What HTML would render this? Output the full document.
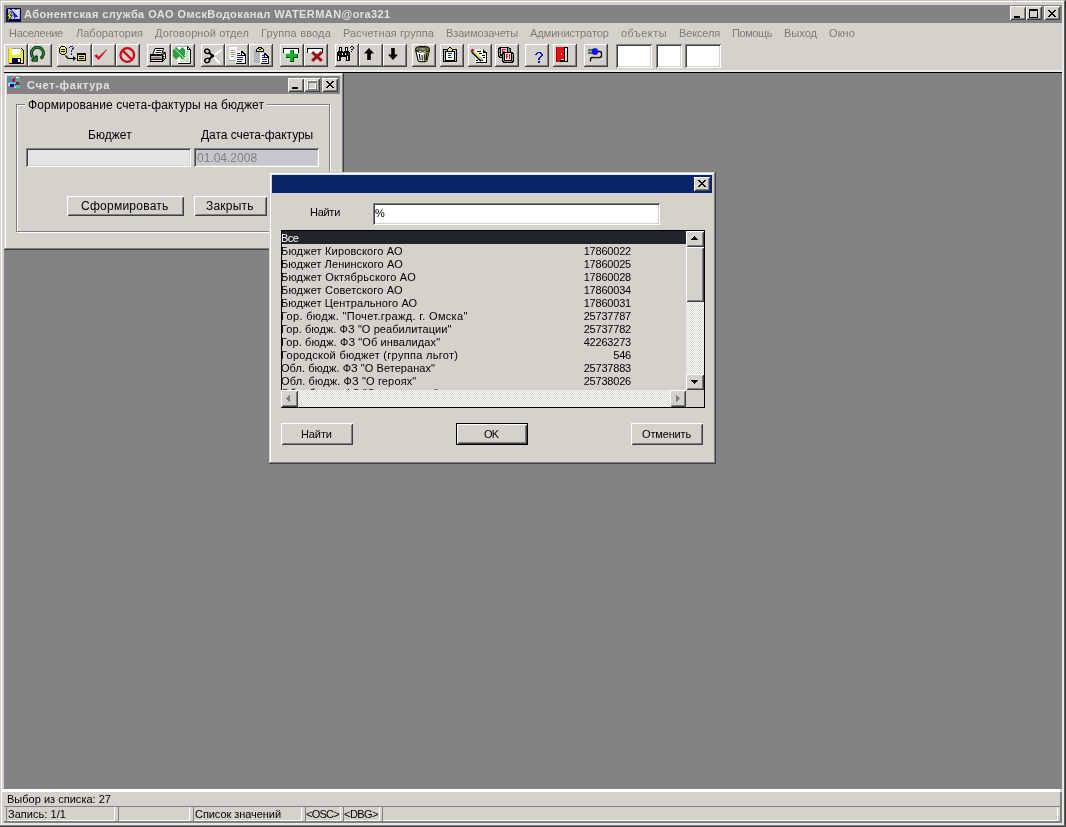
<!DOCTYPE html>
<html><head><meta charset="utf-8"><title>Oracle Forms</title>
<style>
html,body{margin:0;padding:0;}
body{width:1066px;height:827px;overflow:hidden;background:#D5D2CB;position:relative;font-family:"Liberation Sans",sans-serif;font-size:11px;}
div,svg{position:absolute;box-sizing:border-box;}
</style></head><body>
<div style="left:0px;top:0px;width:1066px;height:1px;background:#C8C5BE;"></div>
<div style="left:1px;top:1px;width:1063px;height:1px;background:#FFFFFF;"></div>
<div style="left:1px;top:1px;width:1px;height:824px;background:#FFFFFF;"></div>
<div style="left:1062px;top:4px;width:2px;height:821px;background:#ECEAE6;"></div>
<div style="left:1064px;top:1px;width:1px;height:825px;background:#5A5A5A;"></div>
<div style="left:1065px;top:0px;width:1px;height:827px;background:#3A3A3A;"></div>
<div style="left:0px;top:825px;width:1065px;height:1px;background:#808080;"></div>
<div style="left:0px;top:826px;width:1066px;height:1px;background:#404040;"></div>
<div style="left:4px;top:5px;width:1058px;height:18px;background:#848284;"></div>
<div style="left:24px;top:7px;font-size:11px;line-height:15px;color:#E4E2DC;white-space:pre;will-change:transform;letter-spacing:0.420px;font-weight:bold;">Абонентская служба ОАО ОмскВодоканал WATERMAN@ora321</div>
<div style="left:1010px;top:6px;width:16px;height:14px;background:#D5D2CB;box-shadow:inset 1px 1px 0 #FFFFFF,inset -1px -1px 0 #404040,inset 2px 2px 0 #D5D2CB,inset -2px -2px 0 #808080;"></div>
<div style="left:1026px;top:6px;width:16px;height:14px;background:#D5D2CB;box-shadow:inset 1px 1px 0 #FFFFFF,inset -1px -1px 0 #404040,inset 2px 2px 0 #D5D2CB,inset -2px -2px 0 #808080;"></div>
<div style="left:1044px;top:6px;width:16px;height:14px;background:#D5D2CB;box-shadow:inset 1px 1px 0 #FFFFFF,inset -1px -1px 0 #404040,inset 2px 2px 0 #D5D2CB,inset -2px -2px 0 #808080;"></div>
<div style="left:1014px;top:16px;width:6px;height:2px;background:#000;"></div>
<div style="left:1029px;top:9px;width:9px;height:9px;border:1px solid #000;border-top-width:2px;"></div>
<svg style="left:1048px;top:10px" width="8" height="7" viewBox="0 0 8 7" shape-rendering="crispEdges"><path d="M0 0h2v1h1v1h2v-1h1v-1h2v1h-1v1h-1v1h-1v1h1v1h1v1h1v1h-2v-1h-1v-1h-2v1h-1v1h-2v-1h1v-1h1v-1h1v-1h-1v-1h-1v-1h-1z" fill="#000"/></svg>
<div style="left:9px;top:26px;font-size:11px;line-height:15px;color:#7E7C78;white-space:pre;will-change:transform;letter-spacing:-0.244px;">Население</div>
<div style="left:76px;top:26px;font-size:11px;line-height:15px;color:#7E7C78;white-space:pre;will-change:transform;">Лаборатория</div>
<div style="left:155px;top:26px;font-size:11px;line-height:15px;color:#7E7C78;white-space:pre;will-change:transform;letter-spacing:0.119px;">Договорной отдел</div>
<div style="left:261px;top:26px;font-size:11px;line-height:15px;color:#7E7C78;white-space:pre;will-change:transform;letter-spacing:0.175px;">Группа ввода</div>
<div style="left:343px;top:26px;font-size:11px;line-height:15px;color:#7E7C78;white-space:pre;will-change:transform;letter-spacing:0.081px;">Расчетная группа</div>
<div style="left:446px;top:26px;font-size:11px;line-height:15px;color:#7E7C78;white-space:pre;will-change:transform;letter-spacing:-0.125px;">Взаимозачеты</div>
<div style="left:530px;top:26px;font-size:11px;line-height:15px;color:#7E7C78;white-space:pre;will-change:transform;letter-spacing:-0.031px;">Администратор</div>
<div style="left:621px;top:26px;font-size:11px;line-height:15px;color:#7E7C78;white-space:pre;will-change:transform;letter-spacing:0.443px;">объекты</div>
<div style="left:679px;top:26px;font-size:11px;line-height:15px;color:#7E7C78;white-space:pre;will-change:transform;letter-spacing:-0.143px;">Векселя</div>
<div style="left:732px;top:26px;font-size:11px;line-height:15px;color:#7E7C78;white-space:pre;will-change:transform;letter-spacing:-0.417px;">Помощь</div>
<div style="left:784px;top:26px;font-size:11px;line-height:15px;color:#7E7C78;white-space:pre;will-change:transform;letter-spacing:0.020px;">Выход</div>
<div style="left:829px;top:26px;font-size:11px;line-height:15px;color:#7E7C78;white-space:pre;will-change:transform;letter-spacing:0.100px;">Окно</div>
<div style="left:4px;top:44px;width:24px;height:23px;background:#D5D2CB;box-shadow:inset 1px 1px 0 #FFFFFF,inset -1px -1px 0 #808080;"></div>
<div style="left:4px;top:66px;width:24px;height:1px;background:#404040;"></div>
<div style="left:27px;top:44px;width:1px;height:23px;background:#404040;"></div>
<div style="left:5px;top:65px;width:22px;height:1px;background:#808080;"></div>
<div style="left:26px;top:45px;width:1px;height:21px;background:#808080;"></div>
<div style="left:28px;top:44px;width:24px;height:23px;background:#D5D2CB;box-shadow:inset 1px 1px 0 #FFFFFF,inset -1px -1px 0 #808080;"></div>
<div style="left:28px;top:66px;width:24px;height:1px;background:#404040;"></div>
<div style="left:51px;top:44px;width:1px;height:23px;background:#404040;"></div>
<div style="left:29px;top:65px;width:22px;height:1px;background:#808080;"></div>
<div style="left:50px;top:45px;width:1px;height:21px;background:#808080;"></div>
<div style="left:57px;top:44px;width:35px;height:23px;background:#D5D2CB;box-shadow:inset 1px 1px 0 #FFFFFF,inset -1px -1px 0 #808080;"></div>
<div style="left:57px;top:66px;width:35px;height:1px;background:#404040;"></div>
<div style="left:91px;top:44px;width:1px;height:23px;background:#404040;"></div>
<div style="left:58px;top:65px;width:33px;height:1px;background:#808080;"></div>
<div style="left:90px;top:45px;width:1px;height:21px;background:#808080;"></div>
<div style="left:92px;top:44px;width:24px;height:23px;background:#D5D2CB;box-shadow:inset 1px 1px 0 #FFFFFF,inset -1px -1px 0 #808080;"></div>
<div style="left:92px;top:66px;width:24px;height:1px;background:#404040;"></div>
<div style="left:115px;top:44px;width:1px;height:23px;background:#404040;"></div>
<div style="left:93px;top:65px;width:22px;height:1px;background:#808080;"></div>
<div style="left:114px;top:45px;width:1px;height:21px;background:#808080;"></div>
<div style="left:116px;top:44px;width:24px;height:23px;background:#D5D2CB;box-shadow:inset 1px 1px 0 #FFFFFF,inset -1px -1px 0 #808080;"></div>
<div style="left:116px;top:66px;width:24px;height:1px;background:#404040;"></div>
<div style="left:139px;top:44px;width:1px;height:23px;background:#404040;"></div>
<div style="left:117px;top:65px;width:22px;height:1px;background:#808080;"></div>
<div style="left:138px;top:45px;width:1px;height:21px;background:#808080;"></div>
<div style="left:147px;top:44px;width:24px;height:23px;background:#D5D2CB;box-shadow:inset 1px 1px 0 #FFFFFF,inset -1px -1px 0 #808080;"></div>
<div style="left:147px;top:66px;width:24px;height:1px;background:#404040;"></div>
<div style="left:170px;top:44px;width:1px;height:23px;background:#404040;"></div>
<div style="left:148px;top:65px;width:22px;height:1px;background:#808080;"></div>
<div style="left:169px;top:45px;width:1px;height:21px;background:#808080;"></div>
<div style="left:171px;top:44px;width:24px;height:23px;background:#D5D2CB;box-shadow:inset 1px 1px 0 #FFFFFF,inset -1px -1px 0 #808080;"></div>
<div style="left:171px;top:66px;width:24px;height:1px;background:#404040;"></div>
<div style="left:194px;top:44px;width:1px;height:23px;background:#404040;"></div>
<div style="left:172px;top:65px;width:22px;height:1px;background:#808080;"></div>
<div style="left:193px;top:45px;width:1px;height:21px;background:#808080;"></div>
<div style="left:201px;top:44px;width:24px;height:23px;background:#D5D2CB;box-shadow:inset 1px 1px 0 #FFFFFF,inset -1px -1px 0 #808080;"></div>
<div style="left:201px;top:66px;width:24px;height:1px;background:#404040;"></div>
<div style="left:224px;top:44px;width:1px;height:23px;background:#404040;"></div>
<div style="left:202px;top:65px;width:22px;height:1px;background:#808080;"></div>
<div style="left:223px;top:45px;width:1px;height:21px;background:#808080;"></div>
<div style="left:225px;top:44px;width:24px;height:23px;background:#D5D2CB;box-shadow:inset 1px 1px 0 #FFFFFF,inset -1px -1px 0 #808080;"></div>
<div style="left:225px;top:66px;width:24px;height:1px;background:#404040;"></div>
<div style="left:248px;top:44px;width:1px;height:23px;background:#404040;"></div>
<div style="left:226px;top:65px;width:22px;height:1px;background:#808080;"></div>
<div style="left:247px;top:45px;width:1px;height:21px;background:#808080;"></div>
<div style="left:249px;top:44px;width:24px;height:23px;background:#D5D2CB;box-shadow:inset 1px 1px 0 #FFFFFF,inset -1px -1px 0 #808080;"></div>
<div style="left:249px;top:66px;width:24px;height:1px;background:#404040;"></div>
<div style="left:272px;top:44px;width:1px;height:23px;background:#404040;"></div>
<div style="left:250px;top:65px;width:22px;height:1px;background:#808080;"></div>
<div style="left:271px;top:45px;width:1px;height:21px;background:#808080;"></div>
<div style="left:280px;top:44px;width:24px;height:23px;background:#D5D2CB;box-shadow:inset 1px 1px 0 #FFFFFF,inset -1px -1px 0 #808080;"></div>
<div style="left:280px;top:66px;width:24px;height:1px;background:#404040;"></div>
<div style="left:303px;top:44px;width:1px;height:23px;background:#404040;"></div>
<div style="left:281px;top:65px;width:22px;height:1px;background:#808080;"></div>
<div style="left:302px;top:45px;width:1px;height:21px;background:#808080;"></div>
<div style="left:304px;top:44px;width:24px;height:23px;background:#D5D2CB;box-shadow:inset 1px 1px 0 #FFFFFF,inset -1px -1px 0 #808080;"></div>
<div style="left:304px;top:66px;width:24px;height:1px;background:#404040;"></div>
<div style="left:327px;top:44px;width:1px;height:23px;background:#404040;"></div>
<div style="left:305px;top:65px;width:22px;height:1px;background:#808080;"></div>
<div style="left:326px;top:45px;width:1px;height:21px;background:#808080;"></div>
<div style="left:335px;top:44px;width:24px;height:23px;background:#D5D2CB;box-shadow:inset 1px 1px 0 #FFFFFF,inset -1px -1px 0 #808080;"></div>
<div style="left:335px;top:66px;width:24px;height:1px;background:#404040;"></div>
<div style="left:358px;top:44px;width:1px;height:23px;background:#404040;"></div>
<div style="left:336px;top:65px;width:22px;height:1px;background:#808080;"></div>
<div style="left:357px;top:45px;width:1px;height:21px;background:#808080;"></div>
<div style="left:359px;top:44px;width:24px;height:23px;background:#D5D2CB;box-shadow:inset 1px 1px 0 #FFFFFF,inset -1px -1px 0 #808080;"></div>
<div style="left:359px;top:66px;width:24px;height:1px;background:#404040;"></div>
<div style="left:382px;top:44px;width:1px;height:23px;background:#404040;"></div>
<div style="left:360px;top:65px;width:22px;height:1px;background:#808080;"></div>
<div style="left:381px;top:45px;width:1px;height:21px;background:#808080;"></div>
<div style="left:383px;top:44px;width:24px;height:23px;background:#D5D2CB;box-shadow:inset 1px 1px 0 #FFFFFF,inset -1px -1px 0 #808080;"></div>
<div style="left:383px;top:66px;width:24px;height:1px;background:#404040;"></div>
<div style="left:406px;top:44px;width:1px;height:23px;background:#404040;"></div>
<div style="left:384px;top:65px;width:22px;height:1px;background:#808080;"></div>
<div style="left:405px;top:45px;width:1px;height:21px;background:#808080;"></div>
<div style="left:412px;top:44px;width:24px;height:23px;background:#D5D2CB;box-shadow:inset 1px 1px 0 #FFFFFF,inset -1px -1px 0 #808080;"></div>
<div style="left:412px;top:66px;width:24px;height:1px;background:#404040;"></div>
<div style="left:435px;top:44px;width:1px;height:23px;background:#404040;"></div>
<div style="left:413px;top:65px;width:22px;height:1px;background:#808080;"></div>
<div style="left:434px;top:45px;width:1px;height:21px;background:#808080;"></div>
<div style="left:440px;top:44px;width:24px;height:23px;background:#D5D2CB;box-shadow:inset 1px 1px 0 #FFFFFF,inset -1px -1px 0 #808080;"></div>
<div style="left:440px;top:66px;width:24px;height:1px;background:#404040;"></div>
<div style="left:463px;top:44px;width:1px;height:23px;background:#404040;"></div>
<div style="left:441px;top:65px;width:22px;height:1px;background:#808080;"></div>
<div style="left:462px;top:45px;width:1px;height:21px;background:#808080;"></div>
<div style="left:468px;top:44px;width:24px;height:23px;background:#D5D2CB;box-shadow:inset 1px 1px 0 #FFFFFF,inset -1px -1px 0 #808080;"></div>
<div style="left:468px;top:66px;width:24px;height:1px;background:#404040;"></div>
<div style="left:491px;top:44px;width:1px;height:23px;background:#404040;"></div>
<div style="left:469px;top:65px;width:22px;height:1px;background:#808080;"></div>
<div style="left:490px;top:45px;width:1px;height:21px;background:#808080;"></div>
<div style="left:495px;top:44px;width:24px;height:23px;background:#D5D2CB;box-shadow:inset 1px 1px 0 #FFFFFF,inset -1px -1px 0 #808080;"></div>
<div style="left:495px;top:66px;width:24px;height:1px;background:#404040;"></div>
<div style="left:518px;top:44px;width:1px;height:23px;background:#404040;"></div>
<div style="left:496px;top:65px;width:22px;height:1px;background:#808080;"></div>
<div style="left:517px;top:45px;width:1px;height:21px;background:#808080;"></div>
<div style="left:525px;top:44px;width:24px;height:23px;background:#D5D2CB;box-shadow:inset 1px 1px 0 #FFFFFF,inset -1px -1px 0 #808080;"></div>
<div style="left:525px;top:66px;width:24px;height:1px;background:#404040;"></div>
<div style="left:548px;top:44px;width:1px;height:23px;background:#404040;"></div>
<div style="left:526px;top:65px;width:22px;height:1px;background:#808080;"></div>
<div style="left:547px;top:45px;width:1px;height:21px;background:#808080;"></div>
<div style="left:553px;top:44px;width:24px;height:23px;background:#D5D2CB;box-shadow:inset 1px 1px 0 #FFFFFF,inset -1px -1px 0 #808080;"></div>
<div style="left:553px;top:66px;width:24px;height:1px;background:#404040;"></div>
<div style="left:576px;top:44px;width:1px;height:23px;background:#404040;"></div>
<div style="left:554px;top:65px;width:22px;height:1px;background:#808080;"></div>
<div style="left:575px;top:45px;width:1px;height:21px;background:#808080;"></div>
<div style="left:584px;top:44px;width:24px;height:23px;background:#D5D2CB;box-shadow:inset 1px 1px 0 #FFFFFF,inset -1px -1px 0 #808080;"></div>
<div style="left:584px;top:66px;width:24px;height:1px;background:#404040;"></div>
<div style="left:607px;top:44px;width:1px;height:23px;background:#404040;"></div>
<div style="left:585px;top:65px;width:22px;height:1px;background:#808080;"></div>
<div style="left:606px;top:45px;width:1px;height:21px;background:#808080;"></div>
<div style="left:616px;top:44px;width:36px;height:24px;background:#FFFFFF;box-shadow:inset 1px 1px 0 #808080,inset -1px -1px 0 #FFFFFF,inset 2px 2px 0 #404040,inset -2px -2px 0 #D5D2CB;"></div>
<div style="left:656px;top:44px;width:26px;height:24px;background:#FFFFFF;box-shadow:inset 1px 1px 0 #808080,inset -1px -1px 0 #FFFFFF,inset 2px 2px 0 #404040,inset -2px -2px 0 #D5D2CB;"></div>
<div style="left:685px;top:44px;width:36px;height:24px;background:#FFFFFF;box-shadow:inset 1px 1px 0 #808080,inset -1px -1px 0 #FFFFFF,inset 2px 2px 0 #404040,inset -2px -2px 0 #D5D2CB;"></div>
<div style="left:4px;top:70px;width:1058px;height:2px;background:#ECEAE6;"></div>
<div style="left:4px;top:72px;width:1058px;height:1px;background:#000;"></div>
<div style="left:4px;top:73px;width:1058px;height:716px;background:#848284;"></div>
<div style="left:2px;top:789px;width:1058px;height:3px;background:#FFFFFF;"></div>
<div style="left:4px;top:73px;width:340px;height:177px;background:#D5D2CB;box-shadow:inset -1px -1px 0 #404040,inset 1px 1px 0 #D5D2CB,inset -2px -2px 0 #808080,inset 2px 2px 0 #FFFFFF;"></div>
<div style="left:7px;top:76px;width:333px;height:18px;background:#848284;"></div>
<div style="left:27px;top:78px;font-size:11px;line-height:15px;color:#E4E2DC;white-space:pre;will-change:transform;letter-spacing:0.672px;font-weight:bold;">Счет-фактура</div>
<div style="left:288px;top:78px;width:16px;height:14px;background:#D5D2CB;box-shadow:inset 1px 1px 0 #FFFFFF,inset -1px -1px 0 #404040,inset 2px 2px 0 #D5D2CB,inset -2px -2px 0 #808080;"></div>
<div style="left:304px;top:78px;width:16px;height:14px;background:#D5D2CB;box-shadow:inset 1px 1px 0 #FFFFFF,inset -1px -1px 0 #404040,inset 2px 2px 0 #D5D2CB,inset -2px -2px 0 #808080;"></div>
<div style="left:322px;top:78px;width:16px;height:14px;background:#D5D2CB;box-shadow:inset 1px 1px 0 #FFFFFF,inset -1px -1px 0 #404040,inset 2px 2px 0 #D5D2CB,inset -2px -2px 0 #808080;"></div>
<div style="left:292px;top:87px;width:6px;height:2px;background:#000;"></div>
<div style="left:307px;top:80px;width:9px;height:9px;border:1px solid #fff;border-top-width:2px;"></div>
<div style="left:308px;top:81px;width:9px;height:9px;border:1px solid #808080;border-top-width:2px;"></div>
<svg style="left:326px;top:81px" width="8" height="7" viewBox="0 0 8 7" shape-rendering="crispEdges"><path d="M0 0h2v1h1v1h2v-1h1v-1h2v1h-1v1h-1v1h-1v1h1v1h1v1h1v1h-2v-1h-1v-1h-2v1h-1v1h-2v-1h1v-1h1v-1h1v-1h-1v-1h-1v-1h-1z" fill="#000"/></svg>
<div style="left:16px;top:104px;width:314px;height:128px;border:1px solid #808080;box-shadow:inset 1px 1px 0 #FFFFFF,1px 1px 0 #FFFFFF;"></div>
<div style="left:25px;top:98px;width:242px;height:14px;background:#D5D2CB;"></div>
<div style="left:28px;top:97px;font-size:12px;line-height:16px;color:#000;white-space:pre;will-change:transform;letter-spacing:0.095px;">Формирование счета-фактуры на бюджет</div>
<div style="left:88px;top:127px;font-size:12px;line-height:16px;color:#000;white-space:pre;will-change:transform;letter-spacing:0.050px;">Бюджет</div>
<div style="left:201px;top:127px;font-size:12px;line-height:16px;color:#000;white-space:pre;will-change:transform;letter-spacing:-0.050px;">Дата счета-фактуры</div>
<div style="left:26px;top:148px;width:165px;height:19px;background:#E4E4E4;box-shadow:inset 1px 1px 0 #808080,inset -1px -1px 0 #FFFFFF,inset 2px 2px 0 #404040,inset -2px -2px 0 #D5D2CB;"></div>
<div style="left:194px;top:148px;width:125px;height:19px;background:#C6C6CE;box-shadow:inset 1px 1px 0 #808080,inset -1px -1px 0 #FFFFFF,inset 2px 2px 0 #404040,inset -2px -2px 0 #D5D2CB;"></div>
<div style="left:197px;top:150px;font-size:12px;line-height:16px;color:#808080;white-space:pre;will-change:transform;">01.04.2008</div>
<div style="left:67px;top:196px;width:117px;height:20px;background:#D5D2CB;box-shadow:inset 1px 1px 0 #FFFFFF,inset -1px -1px 0 #404040,inset 2px 2px 0 #D5D2CB,inset -2px -2px 0 #808080;"></div>
<div style="left:81px;top:198px;font-size:12px;line-height:16px;color:#000;white-space:pre;will-change:transform;letter-spacing:0.250px;">Сформировать</div>
<div style="left:194px;top:196px;width:73px;height:20px;background:#D5D2CB;box-shadow:inset 1px 1px 0 #FFFFFF,inset -1px -1px 0 #404040,inset 2px 2px 0 #D5D2CB,inset -2px -2px 0 #808080;"></div>
<div style="left:206px;top:198px;font-size:12px;line-height:16px;color:#000;white-space:pre;will-change:transform;letter-spacing:0.200px;">Закрыть</div>
<div style="left:269px;top:172px;width:447px;height:292px;background:#D5D2CB;box-shadow:inset -1px -1px 0 #404040,inset 1px 1px 0 #D5D2CB,inset -2px -2px 0 #808080,inset 2px 2px 0 #FFFFFF;"></div>
<div style="left:272px;top:174px;width:440px;height:1px;background:#DDE0EE;"></div>
<div style="left:272px;top:193px;width:440px;height:1px;background:#D6D8E6;"></div>
<div style="left:272px;top:175px;width:440px;height:18px;background:#0A246A;"></div>
<div style="left:694px;top:177px;width:16px;height:14px;background:#D5D2CB;box-shadow:inset 1px 1px 0 #FFFFFF,inset -1px -1px 0 #404040,inset 2px 2px 0 #D5D2CB,inset -2px -2px 0 #808080;"></div>
<svg style="left:698px;top:180px" width="8" height="7" viewBox="0 0 8 7" shape-rendering="crispEdges"><path d="M0 0h2v1h1v1h2v-1h1v-1h2v1h-1v1h-1v1h-1v1h1v1h1v1h1v1h-2v-1h-1v-1h-2v1h-1v1h-2v-1h1v-1h1v-1h1v-1h-1v-1h-1v-1h-1z" fill="#000"/></svg>
<div style="left:310px;top:205px;font-size:11px;line-height:15px;color:#000;white-space:pre;will-change:transform;letter-spacing:-0.278px;">Найти</div>
<div style="left:373px;top:203px;width:287px;height:22px;background:#FFFFFF;box-shadow:inset 1px 1px 0 #808080,inset -1px -1px 0 #FFFFFF,inset 2px 2px 0 #404040,inset -2px -2px 0 #D5D2CB;"></div>
<div style="left:375px;top:206px;font-size:11px;line-height:15px;color:#000;white-space:pre;will-change:transform;">%</div>
<div style="left:281px;top:230px;width:424px;height:178px;background:#D5D2CB;border:1px solid #000;"></div>
<div style="left:282px;top:231px;width:404px;height:13px;background:#22242C;"></div>
<div style="left:281px;top:231px;font-size:11px;line-height:15px;color:#fff;white-space:pre;will-change:transform;letter-spacing:-0.556px;">Все</div>
<div style="left:281px;top:244px;font-size:11px;line-height:15px;color:#000;white-space:pre;will-change:transform;letter-spacing:0.164px;">Бюджет Кировского АО</div>
<div style="left:559px;top:244px;width:72px;text-align:right;font-size:11px;line-height:15px;letter-spacing:-0.2px;will-change:transform">17860022</div>
<div style="left:281px;top:257px;font-size:11px;line-height:15px;color:#000;white-space:pre;will-change:transform;letter-spacing:0.108px;">Бюджет Ленинского АО</div>
<div style="left:559px;top:257px;width:72px;text-align:right;font-size:11px;line-height:15px;letter-spacing:-0.2px;will-change:transform">17860025</div>
<div style="left:281px;top:270px;font-size:11px;line-height:15px;color:#000;white-space:pre;will-change:transform;letter-spacing:0.194px;">Бюджет Октябрьского АО</div>
<div style="left:559px;top:270px;width:72px;text-align:right;font-size:11px;line-height:15px;letter-spacing:-0.2px;will-change:transform">17860028</div>
<div style="left:281px;top:283px;font-size:11px;line-height:15px;color:#000;white-space:pre;will-change:transform;letter-spacing:0.167px;">Бюджет Советского АО</div>
<div style="left:559px;top:283px;width:72px;text-align:right;font-size:11px;line-height:15px;letter-spacing:-0.2px;will-change:transform">17860034</div>
<div style="left:281px;top:296px;font-size:11px;line-height:15px;color:#000;white-space:pre;will-change:transform;letter-spacing:0.132px;">Бюджет Центрального АО</div>
<div style="left:559px;top:296px;width:72px;text-align:right;font-size:11px;line-height:15px;letter-spacing:-0.2px;will-change:transform">17860031</div>
<div style="left:281px;top:309px;font-size:11px;line-height:15px;color:#000;white-space:pre;will-change:transform;letter-spacing:0.331px;">Гор. бюдж. "Почет.гражд. г. Омска"</div>
<div style="left:559px;top:309px;width:72px;text-align:right;font-size:11px;line-height:15px;letter-spacing:-0.2px;will-change:transform">25737787</div>
<div style="left:281px;top:322px;font-size:11px;line-height:15px;color:#000;white-space:pre;will-change:transform;letter-spacing:0.076px;">Гор. бюдж. ФЗ "О реабилитации"</div>
<div style="left:559px;top:322px;width:72px;text-align:right;font-size:11px;line-height:15px;letter-spacing:-0.2px;will-change:transform">25737782</div>
<div style="left:281px;top:335px;font-size:11px;line-height:15px;color:#000;white-space:pre;will-change:transform;letter-spacing:0.106px;">Гор. бюдж. ФЗ "Об инвалидах"</div>
<div style="left:559px;top:335px;width:72px;text-align:right;font-size:11px;line-height:15px;letter-spacing:-0.2px;will-change:transform">42263273</div>
<div style="left:281px;top:348px;font-size:11px;line-height:15px;color:#000;white-space:pre;will-change:transform;letter-spacing:0.290px;">Городской бюджет (группа льгот)</div>
<div style="left:559px;top:348px;width:72px;text-align:right;font-size:11px;line-height:15px;letter-spacing:-0.2px;will-change:transform">546</div>
<div style="left:281px;top:361px;font-size:11px;line-height:15px;color:#000;white-space:pre;will-change:transform;letter-spacing:0.051px;">Обл. бюдж. ФЗ "О Ветеранах"</div>
<div style="left:559px;top:361px;width:72px;text-align:right;font-size:11px;line-height:15px;letter-spacing:-0.2px;will-change:transform">25737883</div>
<div style="left:281px;top:374px;font-size:11px;line-height:15px;color:#000;white-space:pre;will-change:transform;letter-spacing:0.135px;">Обл. бюдж. ФЗ "О героях"</div>
<div style="left:559px;top:374px;width:72px;text-align:right;font-size:11px;line-height:15px;letter-spacing:-0.2px;will-change:transform">25738026</div>
<div style="left:281px;top:387px;width:405px;height:3px;overflow:hidden"><div style="left:0px;top:-1px;font-size:11px;line-height:15px;white-space:pre;letter-spacing:0.2px;will-change:transform">Обл. бюдж. ФЗ "О донорстве"</div></div>
<div style="left:686px;top:231px;width:18px;height:159px;background:conic-gradient(#fff 25%,#D5D2CB 0 50%,#fff 0 75%,#D5D2CB 0) 0 0/2px 2px;"></div>
<div style="left:686px;top:231px;width:18px;height:16px;background:#D5D2CB;box-shadow:inset 1px 1px 0 #FFFFFF,inset -1px -1px 0 #404040,inset 2px 2px 0 #D5D2CB,inset -2px -2px 0 #808080;"></div>
<svg style="left:691px;top:236px" width="7" height="4" viewBox="0 0 7 4" shape-rendering="crispEdges"><path d="M3 0h1v1h1v1h1v1h1v1h-7v-1h1v-1h1v-1h1z" fill="#000"/></svg>
<div style="left:686px;top:247px;width:18px;height:55px;background:#D5D2CB;box-shadow:inset 1px 1px 0 #FFFFFF,inset -1px -1px 0 #404040,inset 2px 2px 0 #D5D2CB,inset -2px -2px 0 #808080;"></div>
<div style="left:686px;top:374px;width:18px;height:16px;background:#D5D2CB;box-shadow:inset 1px 1px 0 #FFFFFF,inset -1px -1px 0 #404040,inset 2px 2px 0 #D5D2CB,inset -2px -2px 0 #808080;"></div>
<svg style="left:691px;top:380px" width="7" height="4" viewBox="0 0 7 4" shape-rendering="crispEdges"><path d="M0 0h7v1h-1v1h-1v1h-1v1h-1v-1h-1v-1h-1v-1h-1z" fill="#000"/></svg>
<div style="left:281px;top:390px;width:405px;height:17px;background:conic-gradient(#fff 25%,#D5D2CB 0 50%,#fff 0 75%,#D5D2CB 0) 0 0/2px 2px;"></div>
<div style="left:281px;top:390px;width:17px;height:17px;background:#D5D2CB;box-shadow:inset 1px 1px 0 #FFFFFF,inset -1px -1px 0 #404040,inset 2px 2px 0 #D5D2CB,inset -2px -2px 0 #808080;"></div>
<svg style="left:286px;top:395px" width="4" height="7" viewBox="0 0 4 7" shape-rendering="crispEdges"><path d="M3 0h1v7h-1v-1h-1v-1h-1v-1h-1v-1h1v-1h1v-1h1z" fill="#808080"/></svg>
<div style="left:670px;top:390px;width:16px;height:17px;background:#D5D2CB;box-shadow:inset 1px 1px 0 #FFFFFF,inset -1px -1px 0 #404040,inset 2px 2px 0 #D5D2CB,inset -2px -2px 0 #808080;"></div>
<svg style="left:676px;top:395px" width="4" height="7" viewBox="0 0 4 7" shape-rendering="crispEdges"><path d="M0 0h1v1h1v1h1v1h1v1h-1v1h-1v1h-1v1h-1z" fill="#808080"/></svg>
<div style="left:686px;top:390px;width:18px;height:17px;background:#D5D2CB;"></div>
<div style="left:281px;top:423px;width:72px;height:22px;background:#D5D2CB;box-shadow:inset 1px 1px 0 #FFFFFF,inset -1px -1px 0 #404040,inset 2px 2px 0 #D5D2CB,inset -2px -2px 0 #808080;"></div>
<div style="left:301px;top:427px;font-size:11px;line-height:15px;color:#000;white-space:pre;will-change:transform;letter-spacing:-0.100px;">Найти</div>
<div style="left:456px;top:423px;width:72px;height:22px;background:#000;"></div>
<div style="left:457px;top:424px;width:70px;height:20px;background:#D5D2CB;box-shadow:inset 1px 1px 0 #FFFFFF,inset -1px -1px 0 #404040,inset 2px 2px 0 #D5D2CB,inset -2px -2px 0 #808080;"></div>
<div style="left:484px;top:427px;font-size:11px;line-height:15px;color:#000;white-space:pre;will-change:transform;letter-spacing:-0.800px;">OK</div>
<div style="left:631px;top:423px;width:72px;height:22px;background:#D5D2CB;box-shadow:inset 1px 1px 0 #FFFFFF,inset -1px -1px 0 #404040,inset 2px 2px 0 #D5D2CB,inset -2px -2px 0 #808080;"></div>
<div style="left:642px;top:427px;font-size:11px;line-height:15px;color:#000;white-space:pre;will-change:transform;letter-spacing:-0.158px;">Отменить</div>
<div style="left:7px;top:792px;font-size:11px;line-height:15px;color:#000;white-space:pre;will-change:transform;letter-spacing:0.016px;">Выбор из списка: 27</div>
<div style="left:4px;top:806px;width:1056px;height:1px;background:#808080;"></div>
<div style="left:6px;top:806px;width:109px;height:15px;background:#D5D2CB;box-shadow:inset 1px 1px 0 #808080,inset -1px -1px 0 #FFFFFF;"></div>
<div style="left:118px;top:806px;width:72px;height:15px;background:#D5D2CB;box-shadow:inset 1px 1px 0 #808080,inset -1px -1px 0 #FFFFFF;"></div>
<div style="left:193px;top:806px;width:109px;height:15px;background:#D5D2CB;box-shadow:inset 1px 1px 0 #808080,inset -1px -1px 0 #FFFFFF;"></div>
<div style="left:305px;top:806px;width:36px;height:15px;background:#D5D2CB;box-shadow:inset 1px 1px 0 #808080,inset -1px -1px 0 #FFFFFF;"></div>
<div style="left:343px;top:806px;width:37px;height:15px;background:#D5D2CB;box-shadow:inset 1px 1px 0 #808080,inset -1px -1px 0 #FFFFFF;"></div>
<div style="left:382px;top:806px;width:676px;height:15px;background:#D5D2CB;box-shadow:inset 1px 1px 0 #808080,inset -1px -1px 0 #FFFFFF;"></div>
<div style="left:8px;top:807px;font-size:11px;line-height:15px;color:#000;white-space:pre;will-change:transform;letter-spacing:0.045px;">Запись: 1/1</div>
<div style="left:195px;top:807px;font-size:11px;line-height:15px;color:#000;white-space:pre;will-change:transform;letter-spacing:-0.058px;">Список значений</div>
<div style="left:306px;top:807px;font-size:11px;line-height:15px;color:#000;white-space:pre;will-change:transform;letter-spacing:-0.738px;">&lt;OSC&gt;</div>
<div style="left:344px;top:807px;font-size:11px;line-height:15px;color:#000;white-space:pre;will-change:transform;letter-spacing:-0.537px;">&lt;DBG&gt;</div>
<div style="left:1060px;top:792px;width:2px;height:31px;background:#808080;"></div>
<div style="left:4px;top:821px;width:1057px;height:1px;background:#808080;"></div>
<div style="left:4px;top:822px;width:1058px;height:1px;background:#808080;"></div>
<div style="left:2px;top:823px;width:1062px;height:2px;background:#E8E6E2;"></div>
<svg style="left:8px;top:48px" width="16" height="16" viewBox="0 0 16 16" shape-rendering="crispEdges"><rect x="0" y="0" width="14" height="16" fill="#ECEC40"/><rect x="14" y="2" width="1" height="14" fill="#ECEC40"/><rect x="13" y="0" width="1" height="1" fill="#000"/><rect x="14" y="1" width="1" height="1" fill="#000"/><rect x="15" y="2" width="1" height="14" fill="#000"/><rect x="1" y="15" width="15" height="1" fill="#000"/><rect x="0" y="0" width="1" height="15" fill="#C0C020"/><rect x="4" y="0" width="8" height="1" fill="#A0A090"/><rect x="4" y="1" width="8" height="6" fill="#fff"/><rect x="4" y="10" width="9" height="6" fill="#000"/><rect x="5" y="11" width="4" height="4" fill="#080840"/><rect x="10" y="11" width="2" height="3" fill="#fff"/></svg>
<svg style="left:30px;top:46px" width="16" height="17" viewBox="0 0 16 17"><path d="M10.6 12.4 A6 6 0 1 0 3.0 11.3" fill="none" stroke="#0C3A14" stroke-width="3.1"/><path d="M0.9 13.8 L6.2 9.0 L7.9 10.2 L7.9 15.7 L2.2 15.7 Z" fill="#0C3A14"/><path d="M10.6 12.4 A6 6 0 1 0 3.0 11.3" fill="none" stroke="#358A40" stroke-width="1.1"/><path d="M2.8 13.9 L6.6 10.6 L6.9 14.7 L3.2 14.7 Z" fill="#2E7D38"/></svg>
<svg style="left:59px;top:46px" width="8" height="9" viewBox="0 0 8 9" shape-rendering="crispEdges"><rect x="2" y="0" width="4" height="1" fill="#000"/><rect x="1" y="1" width="1" height="1" fill="#000"/><rect x="2" y="1" width="4" height="1" fill="#F4F480"/><rect x="6" y="1" width="1" height="1" fill="#000"/><rect x="0" y="2" width="1" height="1" fill="#000"/><rect x="1" y="2" width="1" height="1" fill="#E0E040"/><rect x="2" y="2" width="4" height="1" fill="#F4F480"/><rect x="6" y="2" width="1" height="1" fill="#E0E040"/><rect x="7" y="2" width="1" height="1" fill="#000"/><rect x="0" y="3" width="1" height="1" fill="#000"/><rect x="1" y="3" width="1" height="1" fill="#E0E040"/><rect x="2" y="3" width="4" height="1" fill="#000"/><rect x="6" y="3" width="1" height="1" fill="#E0E040"/><rect x="7" y="3" width="1" height="1" fill="#000"/><rect x="0" y="4" width="1" height="1" fill="#000"/><rect x="1" y="4" width="6" height="1" fill="#E0E040"/><rect x="7" y="4" width="1" height="1" fill="#000"/><rect x="0" y="5" width="1" height="1" fill="#000"/><rect x="1" y="5" width="1" height="1" fill="#E0E040"/><rect x="2" y="5" width="4" height="1" fill="#000"/><rect x="6" y="5" width="1" height="1" fill="#E0E040"/><rect x="7" y="5" width="1" height="1" fill="#000"/><rect x="0" y="6" width="1" height="1" fill="#000"/><rect x="1" y="6" width="6" height="1" fill="#E0E040"/><rect x="7" y="6" width="1" height="1" fill="#000"/><rect x="1" y="7" width="1" height="1" fill="#000"/><rect x="2" y="7" width="4" height="1" fill="#E0E040"/><rect x="6" y="7" width="1" height="1" fill="#000"/><rect x="2" y="8" width="4" height="1" fill="#000"/></svg>
<svg style="left:69px;top:46px" width="5" height="9" viewBox="0 0 5 9" shape-rendering="crispEdges"><rect x="1" y="0" width="3" height="1" fill="#20208C"/><rect x="0" y="1" width="1" height="1" fill="#20208C"/><rect x="4" y="1" width="1" height="1" fill="#20208C"/><rect x="3" y="2" width="2" height="1" fill="#20208C"/><rect x="3" y="3" width="1" height="1" fill="#20208C"/><rect x="2" y="4" width="1" height="1" fill="#20208C"/><rect x="2" y="5" width="1" height="1" fill="#20208C"/><rect x="2" y="7" width="1" height="1" fill="#20208C"/><rect x="2" y="8" width="1" height="1" fill="#20208C"/></svg>
<svg style="left:65px;top:55px" width="12" height="7" viewBox="0 0 12 7"><path d="M0.5 0.5 L3 3.5 H10" fill="none" stroke="#000" stroke-width="1.2"/><path d="M8.2 1 L11.2 3.5 L8.2 6Z" fill="#000"/></svg>
<svg style="left:77px;top:53px" width="9" height="8" viewBox="0 0 9 8" shape-rendering="crispEdges"><rect x="0" y="0" width="6" height="1" fill="#080850"/><rect x="6" y="0" width="1" height="1" fill="#000"/><rect x="7" y="0" width="1" height="1" fill="#080850"/><rect x="8" y="0" width="1" height="1" fill="#000"/><rect x="0" y="1" width="6" height="1" fill="#080850"/><rect x="6" y="1" width="3" height="1" fill="#000"/><rect x="0" y="2" width="1" height="1" fill="#000"/><rect x="1" y="2" width="7" height="1" fill="#E8E838"/><rect x="8" y="2" width="1" height="1" fill="#000"/><rect x="0" y="3" width="1" height="1" fill="#000"/><rect x="1" y="3" width="1" height="1" fill="#E8E838"/><rect x="2" y="3" width="5" height="1" fill="#000"/><rect x="7" y="3" width="1" height="1" fill="#E8E838"/><rect x="8" y="3" width="1" height="1" fill="#000"/><rect x="0" y="4" width="1" height="1" fill="#000"/><rect x="1" y="4" width="7" height="1" fill="#E8E838"/><rect x="8" y="4" width="1" height="1" fill="#000"/><rect x="0" y="5" width="1" height="1" fill="#000"/><rect x="1" y="5" width="1" height="1" fill="#E8E838"/><rect x="2" y="5" width="5" height="1" fill="#000"/><rect x="7" y="5" width="1" height="1" fill="#E8E838"/><rect x="8" y="5" width="1" height="1" fill="#000"/><rect x="0" y="6" width="1" height="1" fill="#000"/><rect x="1" y="6" width="7" height="1" fill="#E8E838"/><rect x="8" y="6" width="1" height="1" fill="#000"/><rect x="0" y="7" width="9" height="1" fill="#000"/></svg>
<svg style="left:94px;top:49px" width="14" height="12" viewBox="0 0 14 12"><path d="M0.3 6.8 L2.6 5.2 L4.6 7.8 L12.5 0.2 L13 0.7 L4.7 11 Z" fill="#D80820"/></svg>
<svg style="left:119px;top:47px" width="17" height="16" viewBox="0 0 17 16"><circle cx="8.3" cy="8" r="6.8" fill="none" stroke="#CC0818" stroke-width="2.3"/><path d="M3.6 3.4 L13 12.7" stroke="#CC0818" stroke-width="2.3"/></svg>
<svg style="left:150px;top:48px" width="16" height="14" viewBox="0 0 16 14"><path d="M5 0.5 H13.5 L11.6 6.5 H2.8 Z" fill="#fff" stroke="#000" stroke-width="1"/><path d="M6.2 2.5 H11.6 M5.4 4.5 H10.8" stroke="#000" stroke-width="0.9"/><path d="M12.5 6.5 L15.5 4.6 V10.5 L12.5 13.5 Z" fill="#A8A8A8" stroke="#000" stroke-width="1"/><path d="M13 4.2 L15.5 4.6" stroke="#000" stroke-width="1"/><rect x="0.5" y="6.5" width="12" height="7" fill="#C8C8C8" stroke="#000" stroke-width="1"/><rect x="1" y="7" width="11" height="1" fill="#000"/><rect x="1" y="9" width="11" height="2" fill="#8C8C8C"/><rect x="5" y="9" width="4" height="1" fill="#B84848"/><rect x="1" y="11" width="11" height="1" fill="#000"/><rect x="2" y="12" width="10" height="1" fill="#D8D8D8"/><rect x="13" y="8" width="1" height="1" fill="#000"/><rect x="14" y="7" width="1" height="1" fill="#fff"/><rect x="13" y="10" width="1" height="1" fill="#000"/><rect x="14" y="9" width="1" height="1" fill="#fff"/></svg>
<svg style="left:173px;top:45px" width="18" height="20" viewBox="0 0 18 20"><path d="M4.5 1.5 H14.5 L17.5 4.5 V18.5 H4.5 Z" fill="#fff" stroke="#000" stroke-width="1"/><path d="M14.5 1.5 V4.5 H17.5" fill="none" stroke="#000"/><rect x="4" y="1" width="1" height="18" fill="#F0F0F0"/><rect x="4" y="1" width="10" height="1" fill="#B0B0B0"/><path d="M12 7 h4 M12 9 h4 M12 11 h4 M7 14 h9 M7 16 h9 M14 6 v11 M11 13 v4" stroke="#A8D0A8" stroke-width="1"/><path d="M1.6 3.6 L11 13 M11 3.6 L1.6 13" stroke="#2F9E42" stroke-width="4.4"/><rect x="0" y="5" width="3" height="6" fill="#2F9E42"/><rect x="9" y="6" width="3" height="4" fill="#2F9E42"/><path d="M1 3 L11.5 13.5" stroke="#C8F4D0" stroke-width="0.9"/></svg>
<svg style="left:204px;top:48px" width="18" height="16" viewBox="0 0 18 16"><path d="M7.5 7.6 L17.9 0.2 L17.9 2.2 L10 9.2 Z" fill="#fff" stroke="#C0C0C0" stroke-width="0.3"/><path d="M7.5 8.4 L10.5 7.2 L17.6 15.8 L14.2 15.8 Z" fill="#fff" stroke="#A0A0A0" stroke-width="0.4"/><ellipse cx="3.2" cy="3.3" rx="2.5" ry="2.1" fill="none" stroke="#000" stroke-width="1.5" transform="rotate(25 3.2 3.3)"/><ellipse cx="3.2" cy="12.5" rx="2.5" ry="2.1" fill="none" stroke="#000" stroke-width="1.5" transform="rotate(-25 3.2 12.5)"/><path d="M5.2 4.6 L9.6 9 M5.2 11.2 L9.6 6.8" stroke="#000" stroke-width="2"/></svg>
<svg style="left:229px;top:47px" width="17" height="18" viewBox="0 0 17 18" shape-rendering="crispEdges"><rect x="0" y="0" width="8" height="13" fill="#fff"/><rect x="0" y="0" width="1" height="13" fill="#ECECF4"/><rect x="2" y="3" width="4" height="1" fill="#989880"/><rect x="2" y="5" width="4" height="1" fill="#989880"/><rect x="2" y="7" width="4" height="1" fill="#989880"/><rect x="2" y="9" width="3" height="1" fill="#989880"/><rect x="0" y="13" width="7" height="1" fill="#A0A0A0"/><rect x="6" y="4" width="6" height="12" fill="#fff"/><rect x="12" y="7" width="4" height="9" fill="#fff"/><rect x="6" y="4" width="1" height="12" fill="#E0E0F4"/><path d="M12.5 4 L16.5 8 V16.5 H7" fill="none" stroke="#000" stroke-width="1"/><path d="M12.5 4.5 V8 H16.5" fill="none" stroke="#000" stroke-width="1"/><rect x="8" y="6" width="3" height="1" fill="#2020B0"/><rect x="8" y="8" width="4" height="1" fill="#2020B0"/><rect x="8" y="10" width="6" height="1" fill="#2020B0"/><rect x="8" y="12" width="6" height="1" fill="#2020B0"/><rect x="8" y="14" width="5" height="1" fill="#2020B0"/></svg>
<svg style="left:254px;top:47px" width="10" height="16" viewBox="0 0 10 16" shape-rendering="crispEdges"><rect x="4" y="0" width="4" height="1" fill="#000"/><rect x="3" y="1" width="2" height="1" fill="#000"/><rect x="7" y="1" width="2" height="1" fill="#000"/><rect x="0" y="2" width="2" height="1" fill="#C8C8D0"/><rect x="2" y="2" width="1" height="1" fill="#000"/><rect x="3" y="2" width="2" height="1" fill="#E8E868"/><rect x="5" y="2" width="2" height="1" fill="#000"/><rect x="7" y="2" width="2" height="1" fill="#E8E868"/><rect x="9" y="2" width="1" height="1" fill="#000"/><rect x="0" y="3" width="1" height="1" fill="#9C9CA8"/><rect x="1" y="3" width="1" height="1" fill="#C8C8D0"/><rect x="2" y="3" width="1" height="1" fill="#000"/><rect x="3" y="3" width="6" height="1" fill="#E8E868"/><rect x="9" y="3" width="1" height="1" fill="#000"/><rect x="0" y="4" width="1" height="1" fill="#C8C8D0"/><rect x="1" y="4" width="1" height="1" fill="#9C9CA8"/><rect x="2" y="4" width="8" height="1" fill="#000"/><rect x="0" y="5" width="1" height="1" fill="#9C9CA8"/><rect x="1" y="5" width="1" height="1" fill="#C8C8D0"/><rect x="2" y="5" width="1" height="1" fill="#9C9CA8"/><rect x="3" y="5" width="1" height="1" fill="#C8C8D0"/><rect x="4" y="5" width="1" height="1" fill="#9C9CA8"/><rect x="5" y="5" width="1" height="1" fill="#C8C8D0"/><rect x="0" y="6" width="1" height="1" fill="#C8C8D0"/><rect x="1" y="6" width="1" height="1" fill="#9C9CA8"/><rect x="2" y="6" width="1" height="1" fill="#C8C8D0"/><rect x="3" y="6" width="1" height="1" fill="#9C9CA8"/><rect x="4" y="6" width="1" height="1" fill="#C8C8D0"/><rect x="5" y="6" width="1" height="1" fill="#9C9CA8"/><rect x="0" y="7" width="1" height="1" fill="#9C9CA8"/><rect x="1" y="7" width="1" height="1" fill="#C8C8D0"/><rect x="2" y="7" width="1" height="1" fill="#9C9CA8"/><rect x="3" y="7" width="1" height="1" fill="#C8C8D0"/><rect x="4" y="7" width="1" height="1" fill="#9C9CA8"/><rect x="5" y="7" width="1" height="1" fill="#C8C8D0"/><rect x="0" y="8" width="1" height="1" fill="#C8C8D0"/><rect x="1" y="8" width="1" height="1" fill="#9C9CA8"/><rect x="2" y="8" width="1" height="1" fill="#C8C8D0"/><rect x="3" y="8" width="1" height="1" fill="#9C9CA8"/><rect x="4" y="8" width="1" height="1" fill="#C8C8D0"/><rect x="5" y="8" width="1" height="1" fill="#9C9CA8"/><rect x="0" y="9" width="1" height="1" fill="#9C9CA8"/><rect x="1" y="9" width="1" height="1" fill="#C8C8D0"/><rect x="2" y="9" width="1" height="1" fill="#9C9CA8"/><rect x="3" y="9" width="1" height="1" fill="#C8C8D0"/><rect x="4" y="9" width="1" height="1" fill="#9C9CA8"/><rect x="5" y="9" width="1" height="1" fill="#C8C8D0"/><rect x="0" y="10" width="1" height="1" fill="#C8C8D0"/><rect x="1" y="10" width="1" height="1" fill="#9C9CA8"/><rect x="2" y="10" width="1" height="1" fill="#C8C8D0"/><rect x="3" y="10" width="1" height="1" fill="#9C9CA8"/><rect x="4" y="10" width="1" height="1" fill="#C8C8D0"/><rect x="5" y="10" width="1" height="1" fill="#9C9CA8"/><rect x="0" y="11" width="1" height="1" fill="#9C9CA8"/><rect x="1" y="11" width="1" height="1" fill="#C8C8D0"/><rect x="2" y="11" width="1" height="1" fill="#9C9CA8"/><rect x="3" y="11" width="1" height="1" fill="#C8C8D0"/><rect x="4" y="11" width="1" height="1" fill="#9C9CA8"/><rect x="5" y="11" width="1" height="1" fill="#C8C8D0"/><rect x="0" y="12" width="1" height="1" fill="#C8C8D0"/><rect x="1" y="12" width="1" height="1" fill="#9C9CA8"/><rect x="2" y="12" width="1" height="1" fill="#C8C8D0"/><rect x="3" y="12" width="1" height="1" fill="#9C9CA8"/><rect x="4" y="12" width="1" height="1" fill="#C8C8D0"/><rect x="5" y="12" width="1" height="1" fill="#9C9CA8"/><rect x="0" y="13" width="1" height="1" fill="#9C9CA8"/><rect x="1" y="13" width="1" height="1" fill="#C8C8D0"/><rect x="2" y="13" width="1" height="1" fill="#9C9CA8"/><rect x="3" y="13" width="1" height="1" fill="#C8C8D0"/><rect x="4" y="13" width="1" height="1" fill="#9C9CA8"/><rect x="5" y="13" width="1" height="1" fill="#C8C8D0"/><rect x="0" y="14" width="1" height="1" fill="#C8C8D0"/><rect x="1" y="14" width="1" height="1" fill="#9C9CA8"/><rect x="2" y="14" width="1" height="1" fill="#C8C8D0"/><rect x="3" y="14" width="1" height="1" fill="#9C9CA8"/><rect x="4" y="14" width="1" height="1" fill="#C8C8D0"/><rect x="5" y="14" width="1" height="1" fill="#9C9CA8"/><rect x="0" y="15" width="1" height="1" fill="#9C9CA8"/><rect x="1" y="15" width="1" height="1" fill="#C8C8D0"/><rect x="2" y="15" width="1" height="1" fill="#9C9CA8"/><rect x="3" y="15" width="1" height="1" fill="#C8C8D0"/><rect x="4" y="15" width="1" height="1" fill="#9C9CA8"/><rect x="5" y="15" width="1" height="1" fill="#C8C8D0"/></svg>
<svg style="left:260px;top:53px" width="9" height="11" viewBox="0 0 9 11" shape-rendering="crispEdges"><rect x="0" y="0" width="5" height="11" fill="#fff"/><rect x="5" y="3" width="3" height="8" fill="#fff"/><path d="M4.5 0 L8.5 4 V10.5 H1" fill="none" stroke="#000" stroke-width="1"/><path d="M4.5 0.5 V4 H8.5" fill="none" stroke="#000"/><rect x="2" y="2" width="2" height="1" fill="#2020B0"/><rect x="2" y="4" width="4" height="1" fill="#2020B0"/><rect x="2" y="6" width="5" height="1" fill="#2020B0"/><rect x="2" y="8" width="5" height="1" fill="#2020B0"/></svg>
<svg style="left:283px;top:48px" width="16" height="14" viewBox="0 0 16 14" shape-rendering="crispEdges"><rect x="0" y="0" width="16" height="5" fill="#000"/><rect x="1" y="1" width="14" height="4" fill="#fff"/><rect x="7" y="2" width="4" height="12" fill="#083818"/><rect x="3" y="6" width="12" height="4" fill="#083818"/><rect x="7" y="2" width="3" height="11" fill="#10B828"/><rect x="3" y="6" width="11" height="3" fill="#10B828"/></svg>
<svg style="left:307px;top:48px" width="16" height="5" viewBox="0 0 16 5" shape-rendering="crispEdges"><rect x="0" y="0" width="16" height="5" fill="#000"/><rect x="1" y="1" width="14" height="4" fill="#fff"/></svg>
<svg style="left:311px;top:51px" width="12" height="11" viewBox="0 0 12 11"><path d="M1.2 1.2 L10.8 9.8 M10.8 1.2 L1.2 9.8" stroke="#A80C1C" stroke-width="3"/></svg>
<svg style="left:337px;top:46px" width="17" height="16" viewBox="0 0 17 16" shape-rendering="crispEdges"><rect x="2" y="1" width="3" height="5" fill="#000"/><rect x="8" y="1" width="3" height="5" fill="#000"/><rect x="3" y="2" width="1" height="3" fill="#fff"/><rect x="9" y="2" width="1" height="3" fill="#fff"/><rect x="1" y="5" width="5" height="1" fill="#000"/><rect x="7" y="5" width="5" height="1" fill="#000"/><rect x="0" y="6" width="13" height="5" fill="#000"/><rect x="0" y="10" width="4" height="5" fill="#000"/><rect x="9" y="10" width="4" height="5" fill="#000"/><rect x="4" y="10" width="1" height="1" fill="#000"/><rect x="8" y="10" width="1" height="1" fill="#000"/><rect x="1" y="10" width="1" height="4" fill="#fff"/><rect x="10" y="10" width="1" height="4" fill="#fff"/><rect x="5" y="7" width="1" height="2" fill="#fff"/><rect x="8" y="7" width="1" height="2" fill="#fff"/><rect x="2" y="7" width="1" height="2" fill="#404040"/><rect x="11" y="7" width="1" height="2" fill="#404040"/><rect x="14" y="0" width="2" height="1" fill="#000"/><rect x="13" y="1" width="1" height="1" fill="#000"/><rect x="16" y="1" width="1" height="2" fill="#000"/><rect x="15" y="3" width="1" height="1" fill="#000"/><rect x="14" y="3" width="1" height="1" fill="#000"/><rect x="14" y="5" width="1" height="1" fill="#000"/></svg>
<svg style="left:364px;top:48px" width="10" height="12" viewBox="0 0 10 12"><path d="M5 0 L10 5.5 H6.8 V12 H3.2 V5.5 H0 Z" fill="#000"/></svg>
<svg style="left:388px;top:48px" width="10" height="12" viewBox="0 0 10 12"><path d="M5 12 L10 6.5 H6.8 V0 H3.2 V6.5 H0 Z" fill="#000"/></svg>
<svg style="left:415px;top:46px" width="15" height="17" viewBox="0 0 15 17"><path d="M0.6 4.2 L3.2 15 Q7.5 16.6 11.8 15 L14.4 4.2 Q7.5 8.4 0.6 4.2Z" fill="#fff" stroke="#101008" stroke-width="1.1"/><path d="M9.6 6.6 L13.8 4.8 L11.6 14.6 L9.6 15.2Z" fill="#848818"/><ellipse cx="7.5" cy="3.2" rx="6.9" ry="2.7" fill="#8C9030" stroke="#101008" stroke-width="1.1"/><ellipse cx="7.5" cy="3.0" rx="4.2" ry="1.5" fill="#989890" stroke="#202010" stroke-width="0.7"/><path d="M4 5.6 Q7.5 7 11 5.6" fill="none" stroke="#fff" stroke-width="1"/><path d="M4.3 8 L5.2 14 M7 9 L7.3 14.6 M9.3 8.5 L9.3 14.6 M12 7.5 L11.2 14" stroke="#000" stroke-width="1"/></svg>
<svg style="left:443px;top:47px" width="14" height="15" viewBox="0 0 14 15" shape-rendering="crispEdges"><rect x="0" y="2" width="14" height="13" fill="#000"/><rect x="1" y="3" width="12" height="11" fill="#B8B8B8"/><rect x="2" y="4" width="10" height="10" fill="#000"/><rect x="3" y="5" width="8" height="8" fill="#fff"/><rect x="5" y="6" width="4" height="1" fill="#2020B0"/><rect x="5" y="8" width="3" height="1" fill="#2020B0"/><rect x="5" y="10" width="4" height="1" fill="#2020B0"/><rect x="6" y="0" width="2" height="1" fill="#000"/><rect x="5" y="1" width="4" height="1" fill="#000"/><rect x="4" y="2" width="6" height="2" fill="#000"/><rect x="6" y="1" width="2" height="1" fill="#E8E860"/><rect x="5" y="2" width="4" height="2" fill="#E8E860"/></svg>
<svg style="left:470px;top:48px" width="18" height="15" viewBox="0 0 18 15"><rect x="5" y="1" width="12" height="14" fill="#fff"/><path d="M13 1 L17 5 H13 Z" fill="#000"/><rect x="16" y="4" width="1" height="11" fill="#000"/><rect x="6" y="14" width="11" height="1" fill="#000"/><path d="M13.5 0.5 H18 V5 Z" fill="#D4D0C8"/><rect x="7" y="3" width="4" height="1" fill="#000"/><rect x="9" y="5" width="3" height="1" fill="#000"/><rect x="12" y="7" width="3" height="1" fill="#000"/><rect x="13" y="9" width="2" height="1" fill="#000"/><rect x="6" y="12" width="2" height="1" fill="#000"/><rect x="10" y="12" width="3" height="1" fill="#000"/><path d="M2.2 3.2 L11.6 12.6" stroke="#000" stroke-width="3.2"/><path d="M3.2 3 L11 10.8" stroke="#F0EC50" stroke-width="1.9"/><path d="M1.4 1.6 L3.3 3.5" stroke="#982050" stroke-width="3"/><path d="M11 11 L12.2 12.2" stroke="#C8C8C8" stroke-width="1.4"/></svg>
<svg style="left:498px;top:47px" width="16" height="16" viewBox="0 0 16 16" shape-rendering="crispEdges"><rect x="1" y="0" width="10" height="11" fill="#000"/><rect x="0" y="1" width="13" height="9" fill="#000"/><rect x="1" y="2" width="11" height="7" fill="#8C8C8C"/><rect x="2" y="1" width="9" height="9" fill="#8C8C8C"/><rect x="2" y="1" width="8" height="8" fill="#000"/><rect x="3" y="1" width="6" height="6" fill="#F8C8D0"/><rect x="4" y="2" width="1" height="4" fill="#D01030"/><rect x="5" y="2" width="3" height="1" fill="#D01030"/><rect x="5" y="4" width="2" height="1" fill="#D01030"/><rect x="5" y="5" width="10" height="11" fill="#000"/><rect x="4" y="6" width="12" height="9" fill="#000"/><rect x="5" y="7" width="10" height="7" fill="#8C8C8C"/><rect x="6" y="6" width="8" height="9" fill="#8C8C8C"/><rect x="6" y="6" width="8" height="8" fill="#000"/><rect x="7" y="6" width="6" height="7" fill="#FBE4E4"/><rect x="8" y="7" width="1" height="5" fill="#C81028"/><rect x="9" y="7" width="1" height="1" fill="#C81028"/><rect x="9" y="9" width="1" height="1" fill="#C81028"/><rect x="11" y="7" width="1" height="5" fill="#C81028"/></svg>
<svg style="left:535px;top:52px" width="8" height="11" viewBox="0 0 8 11" shape-rendering="crispEdges"><rect x="2" y="0" width="4" height="1" fill="#1010E0"/><rect x="1" y="1" width="2" height="1" fill="#1010E0"/><rect x="5" y="1" width="2" height="1" fill="#1010E0"/><rect x="0" y="2" width="2" height="1" fill="#1010E0"/><rect x="6" y="2" width="2" height="1" fill="#1010E0"/><rect x="6" y="3" width="2" height="1" fill="#1010E0"/><rect x="5" y="4" width="2" height="1" fill="#1010E0"/><rect x="4" y="5" width="2" height="1" fill="#1010E0"/><rect x="3" y="6" width="2" height="1" fill="#1010E0"/><rect x="3" y="7" width="2" height="1" fill="#1010E0"/><rect x="3" y="9" width="2" height="1" fill="#1010E0"/><rect x="3" y="10" width="2" height="1" fill="#1010E0"/></svg>
<svg style="left:556px;top:47px" width="12" height="15" viewBox="0 0 12 15" shape-rendering="crispEdges"><rect x="0" y="0" width="12" height="15" fill="#000"/><rect x="1" y="1" width="10" height="13" fill="#DCD8D0"/><rect x="0" y="0" width="8" height="15" fill="#E81010"/><rect x="0" y="0" width="1" height="15" fill="#A00000"/><rect x="8" y="1" width="1" height="13" fill="#000"/><rect x="5" y="6" width="1" height="2" fill="#fff"/><rect x="4" y="13" width="5" height="2" fill="#000"/><rect x="5" y="12" width="3" height="1" fill="#fff"/></svg>
<svg style="left:588px;top:48px" width="16" height="15" viewBox="0 0 16 15"><path d="M0 2 H5 M0 5 H5" stroke="#000" stroke-width="1.2"/><path d="M0 3.5 H4" stroke="#40D0D0" stroke-width="0.9"/><rect x="4" y="0.3" width="6" height="6.6" rx="2.4" fill="#1010E8"/><path d="M10 3.5 H11.5 Q13.5 3.5 13.5 5.5 V7.5 Q13.5 9.5 11.5 9.5 H4 Q2.5 9.5 2.5 11 V13.5" fill="none" stroke="#000" stroke-width="1.3"/><path d="M11.5 8.7 H4.5" stroke="#E0D040" stroke-width="0.9"/></svg>
<svg style="left:6px;top:8px" width="16" height="14" viewBox="0 0 16 14"><rect x="0" y="1" width="15" height="13" fill="#101060"/><rect x="1" y="0" width="14" height="13" fill="#000040"/><rect x="2" y="1" width="12" height="10" fill="#A8B8F8"/><rect x="7" y="2" width="6" height="8" fill="#D8E4FF"/><rect x="4" y="1" width="2" height="1" fill="#202060"/><rect x="9" y="1" width="2" height="1" fill="#404080"/><path d="M6 2 L12.5 9 L9.5 9 L8.5 11 Z" fill="#2020C8"/><path d="M4.6 3.6 L0.6 8.6 L2.8 8.6 L1.2 13.8 L6.4 7.4 L4.2 7.4 L6.4 3.6 Z" fill="#F0F020" stroke="#181800" stroke-width="0.8"/></svg>
<svg style="left:8px;top:77px" width="13" height="12" viewBox="0 0 13 12" shape-rendering="crispEdges"><rect x="0" y="0" width="4" height="5" fill="#3898B8"/><rect x="4" y="1" width="3" height="4" fill="#C01050"/><rect x="4" y="1" width="1" height="1" fill="#F8D0E0"/><rect x="1" y="5" width="7" height="2" fill="#58C8D0"/><rect x="0" y="6" width="2" height="3" fill="#D0C8E8"/><rect x="2" y="7" width="4" height="3" fill="#1010A0"/><rect x="8" y="1" width="4" height="3" fill="#38C0A0"/><rect x="8" y="0" width="3" height="1" fill="#E8F0F0"/><rect x="8" y="5" width="3" height="3" fill="#A01040"/><rect x="7" y="7" width="2" height="1" fill="#206040"/><rect x="11" y="7" width="1" height="1" fill="#206040"/><rect x="8" y="8" width="4" height="3" fill="#40D0A8"/><rect x="6" y="9" width="2" height="2" fill="#C8C0E0"/></svg>
</body></html>
